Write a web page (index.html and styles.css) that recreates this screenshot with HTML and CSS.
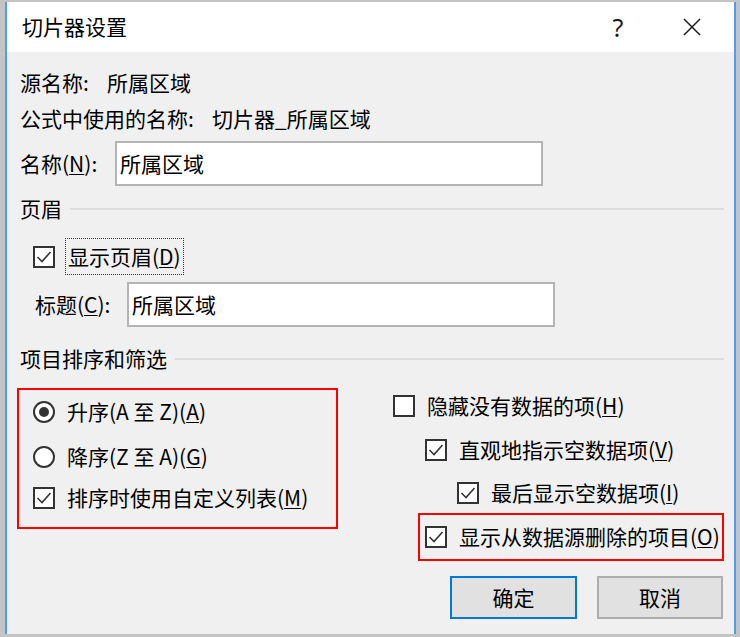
FILE: index.html
```html
<!DOCTYPE html>
<html lang="zh-CN">
<head>
<meta charset="utf-8">
<title>切片器设置</title>
<link rel="stylesheet" href="styles.css">
</head>
<body>
<div class="frame">
  <div class="titlebar">
    <div class="title">切片器设置</div>
    <div class="help">?</div>
    <svg class="close" width="18" height="18" viewBox="0 0 18 18"><path d="M1 1L17 17M17 1L1 17" stroke="#1a1a1a" stroke-width="1.5" fill="none"/></svg>
  </div>
  <div class="content">
    <div class="row r1"><span class="lbl w87">源名称:</span><span>所属区域</span></div>
    <div class="row r2"><span class="lbl w192">公式中使用的名称:</span><span>切片器_所属区域</span></div>
    <div class="row r3"><span class="lbl w95">名称(<u>N</u>):</span><div class="input">所属区域</div></div>
    <div class="section s1"><span>页眉</span><div class="sep"></div></div>
    <div class="row r4">
      <svg class="cb ind13" width="22" height="22" viewBox="0 0 22 22"><rect x="1" y="1" width="20" height="20" fill="#fff" stroke="#333" stroke-width="2"/><polyline points="4.5,11 9,15.5 17.5,6" fill="none" stroke="#333" stroke-width="1.6"/></svg>
      <span class="focus">显示页眉(<u>D</u>)</span>
    </div>
    <div class="row r5"><span class="lbl w92">标题(<u>C</u>):</span><div class="input">所属区域</div></div>
    <div class="section s2"><span>项目排序和筛选</span><div class="sep"></div></div>
    <div class="cols">
      <div class="redbox leftbox">
        <div class="opt h44"><span class="radio on"></span><span class="txt">升序(A 至 Z)(<u>A</u>)</span></div>
        <div class="opt h46"><span class="radio"></span><span class="txt">降序(Z 至 A)(<u>G</u>)</span></div>
        <div class="opt h35"><svg class="cb" width="22" height="22" viewBox="0 0 22 22"><rect x="1" y="1" width="20" height="20" fill="#fff" stroke="#333" stroke-width="2"/><polyline points="4.5,11 9,15.5 17.5,6" fill="none" stroke="#333" stroke-width="1.6"/></svg><span class="txt">排序时使用自定义列表(<u>M</u>)</span></div>
      </div>
      <div class="rightcol">
        <div class="opt h44"><svg class="cb" width="22" height="22" viewBox="0 0 22 22"><rect x="1" y="1" width="20" height="20" fill="#fff" stroke="#333" stroke-width="2"/></svg><span class="txt">隐藏没有数据的项(<u>H</u>)</span></div>
        <div class="opt h44 pl32"><svg class="cb" width="22" height="22" viewBox="0 0 22 22"><rect x="1" y="1" width="20" height="20" fill="#fff" stroke="#333" stroke-width="2"/><polyline points="4.5,11 9,15.5 17.5,6" fill="none" stroke="#333" stroke-width="1.6"/></svg><span class="txt">直观地指示空数据项(<u>V</u>)</span></div>
        <div class="opt h41 pl64"><svg class="cb" width="22" height="22" viewBox="0 0 22 22"><rect x="1" y="1" width="20" height="20" fill="#fff" stroke="#333" stroke-width="2"/><polyline points="4.5,11 9,15.5 17.5,6" fill="none" stroke="#333" stroke-width="1.6"/></svg><span class="txt">最后显示空数据项(<u>I</u>)</span></div>
        <div class="redbox rightbox"><svg class="cb" width="22" height="22" viewBox="0 0 22 22"><rect x="1" y="1" width="20" height="20" fill="#fff" stroke="#333" stroke-width="2"/><polyline points="4.5,11 9,15.5 17.5,6" fill="none" stroke="#333" stroke-width="1.6"/></svg><span class="txt">显示从数据源删除的项目(<u>O</u>)</span></div>
      </div>
    </div>
    <div class="buttons"><div class="btn default">确定</div><div class="btn">取消</div></div>
  </div>
</div>
</body>
</html>
```

FILE: styles.css
```css
html, body {
  margin: 0;
  padding: 0;
}
body {
  width: 740px;
  height: 637px;
  overflow: hidden;
  background: #c4c4c4;
  font-family: "Noto Sans CJK SC", "Noto Sans", sans-serif;
  font-size: 21px;
  line-height: 1.2;
  color: #000;
}
u {
  text-decoration-thickness: 1px;
  text-underline-offset: 2px;
}
.frame {
  margin-left: 5px;
  margin-top: 2px;
  width: 727px;
  height: 632px;
  border-left: 2px solid #4a9ff5;
  border-right: 2px solid #4a9ff5;
  display: flex;
  flex-direction: column;
}
.titlebar {
  height: 50px;
  flex: none;
  background: #fff;
  display: flex;
  align-items: center;
  padding-left: 15px;
}
.title {
  flex: 1;
}
.help {
  width: 40px;
  text-align: center;
  margin-right: 45px;
  font-family: "Noto Sans", sans-serif;
  font-size: 25px;
  line-height: 1;
  color: #1a1a1a;
}
.close {
  margin-right: 33px;
}
.content {
  flex: 1;
  background: #f0f0f0;
  padding: 16px 10px 0 13px;
}
.row {
  display: flex;
  align-items: center;
}
.lbl { flex: none; }
.w87 { width: 87px; }
.w192 { width: 192px; }
.w95 { width: 95px; }
.w92 { width: 92px; margin-left: 15px; }
.r1 { height: 30px; }
.r2 { height: 42px; }
.r3 { height: 45px; margin-top: 1px; }
.r4 { height: 37px; margin-top: 6px; }
.r5 { height: 45px; margin-top: 7px; }
.input {
  box-sizing: border-box;
  width: 428px;
  height: 45px;
  background: #fff;
  border: 2px solid #b4b4b4;
  padding-left: 3px;
  display: flex;
  align-items: center;
}
.section {
  display: flex;
  align-items: center;
}
.s1 { height: 46px; }
.s2 { height: 40px; margin-top: 12px; }
.sep {
  flex: 1;
  height: 2px;
  background: #dcdcdc;
  margin-left: 8px;
}
.cb {
  flex: none;
  display: block;
}
.ind13 { margin-left: 13px; }
.focus {
  box-sizing: border-box;
  height: 37px;
  margin-left: 10px;
  border: 1px dotted #333;
  padding: 0 2px;
  display: flex;
  align-items: center;
}
.cols {
  display: flex;
  align-items: flex-start;
}
.redbox {
  box-sizing: border-box;
  border: 2px solid #ff0000;
}
.leftbox {
  width: 321px;
  margin-left: -3px;
  margin-top: 9px;
  padding: 0 0 12px 14px;
}
.opt {
  display: flex;
  align-items: center;
}
.h44 { height: 44px; }
.h46 { height: 46px; }
.h35 { height: 35px; }
.h41 { height: 41px; }
.pl32 { padding-left: 32px; }
.pl64 { padding-left: 64px; }
.txt { margin-left: 12px; white-space: nowrap; }
.radio {
  flex: none;
  box-sizing: border-box;
  width: 22px;
  height: 22px;
  border: 2px solid #333;
  border-radius: 50%;
  background: #fff;
  display: flex;
  align-items: center;
  justify-content: center;
}
.radio.on::after {
  content: "";
  width: 10px;
  height: 10px;
  border-radius: 50%;
  background: #333;
}
.rightcol {
  flex: 1;
  margin-left: 55px;
  padding-top: 5px;
}
.rightbox {
  margin-left: 25px;
  height: 48px;
  padding-left: 5px;
  display: flex;
  align-items: center;
}
.buttons {
  display: flex;
  justify-content: flex-end;
  gap: 20px;
  margin-top: 15px;
  margin-right: 1px;
}
.btn {
  box-sizing: border-box;
  width: 126px;
  height: 43px;
  background: #e1e1e1;
  border: 2px solid #adadad;
  display: flex;
  align-items: center;
  justify-content: center;
}
.btn.default {
  width: 127px;
  border-color: #0078d7;
}
```
